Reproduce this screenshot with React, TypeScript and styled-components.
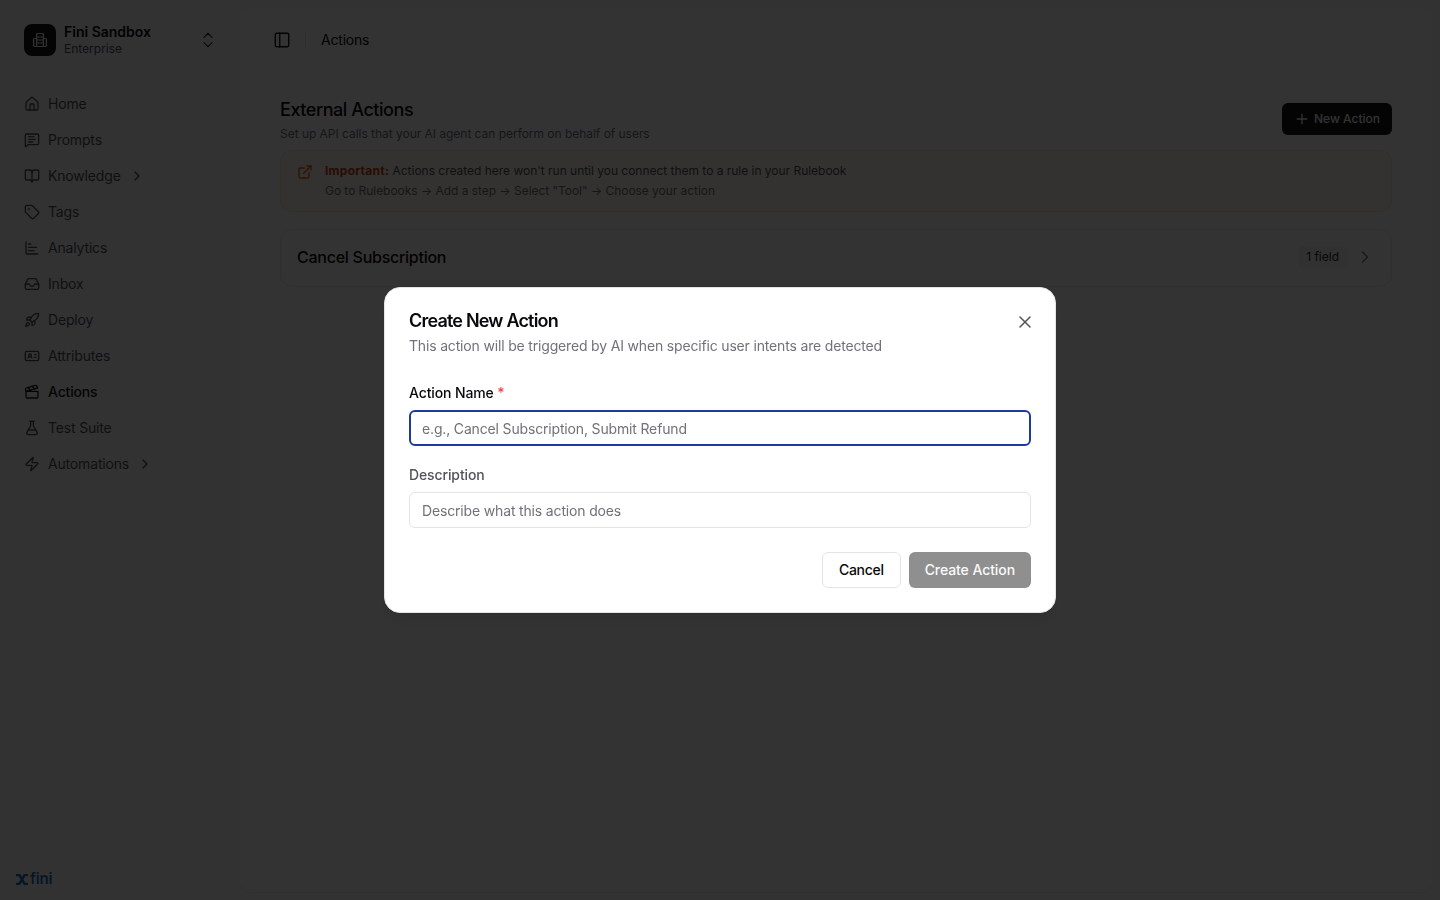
import React from 'react';
import styled, { createGlobalStyle } from 'styled-components';
import {
    BookOpen,
    ChartBar,
    ChevronRight,
    ChevronsUpDown,
    Clapperboard,
    ExternalLink,
    FlaskConical,
    House,
    IdCard,
    Inbox,
    MessageSquareText,
    PanelLeft,
    Plus,
    Rocket,
    Tag,
    X,
    Zap,
} from 'lucide-react';

const GlobalStyle = createGlobalStyle`
    html, body {
        margin: 0;
        height: 100%;
        background: #fafafa;
        font-family: Inter, "Liberation Sans", sans-serif;
        color: #0a0a0a;
        overflow: hidden;
    }
    * {
        box-sizing: border-box;
    }
`;

const Shell = styled.div`
    display: flex;
    width: 100%;
    height: 100vh;
`;

const Sidebar = styled.aside`
    width: 240px;
    flex-shrink: 0;
    display: flex;
    flex-direction: column;
    padding: 24px 16px 11px 16px;
`;

const TeamSwitcher = styled.div`
    display: flex;
    align-items: center;
    gap: 8px;
    height: 32px;
    padding: 0 6px 0 8px;
`;

const TeamLogo = styled.div`
    width: 32px;
    height: 32px;
    border-radius: 8px;
    background: #18181b;
    color: #fafafa;
    display: flex;
    align-items: center;
    justify-content: center;
`;

const TeamText = styled.div`
    flex: 1;
    align-self: flex-start;
    display: flex;
    flex-direction: column;
`;

const TeamName = styled.span`
    font-size: 14px;
    line-height: 16px;
    font-weight: 600;
`;

const TeamPlan = styled.span`
    font-size: 12px;
    line-height: 18px;
    color: #52525b;
`;

const Nav = styled.nav`
    display: flex;
    flex-direction: column;
    margin-top: 30px;
`;

const NavItem = styled.a<{ $active?: boolean }>`
    display: flex;
    align-items: center;
    gap: 8px;
    height: 36px;
    padding: 0 8px;
    font-size: 14px;
    letter-spacing: -0.17px;
    font-weight: ${(p) => (p.$active ? 500 : 400)};
    color: ${(p) => (p.$active ? '#18181b' : '#52525b')};
`;

const NavLabel = styled.span`
    padding-bottom: 2px;
`;

const Brand = styled.div`
    margin-top: auto;
    margin-left: -1px;
    display: flex;
    align-items: center;
    gap: 1px;
    color: #2670c4;
    font-size: 15px;
    font-weight: 600;
    line-height: 20px;
    letter-spacing: -0.2px;
`;

const Main = styled.main`
    flex: 1;
    margin: 8px 8px 8px 0;
    background: #fff;
    border-radius: 12px;
    box-shadow: 0 1px 2px rgba(0, 0, 0, 0.05);
    display: flex;
    flex-direction: column;
`;

const TopBar = styled.header`
    height: 64px;
    display: flex;
    align-items: center;
    padding: 0 33px;
    font-size: 14px;
    letter-spacing: -0.2px;
`;

const TopBarDivider = styled.span`
    width: 1px;
    height: 16px;
    background: #e4e4e7;
    margin: 0 15px 0 14px;
`;

const TopBarLabel = styled.span`
    padding-bottom: 2px;
`;

const Content = styled.div`
    padding: 25px 40px;
    display: flex;
    flex-direction: column;
`;

const PageHeader = styled.div`
    display: flex;
    justify-content: space-between;
    align-items: flex-start;
`;

const PageTitle = styled.h1`
    margin: 0 0 3px;
    font-size: 18px;
    line-height: 26px;
    font-weight: 500;
    letter-spacing: -0.45px;
`;

const PageSubtitle = styled.p`
    margin: 0;
    font-size: 12px;
    line-height: 16px;
    letter-spacing: -0.03px;
    color: #71717a;
`;

const PrimaryButton = styled.button`
    margin-top: 6px;
    display: flex;
    align-items: center;
    gap: 4px;
    height: 32px;
    padding: 0 12px;
    border: none;
    border-radius: 6px;
    background: #18181b;
    color: #fafafa;
    font: 500 12px Inter, sans-serif;
`;

const PrimaryLabel = styled.span`
    padding-bottom: 2px;
`;

const Callout = styled.div`
    margin-top: 8px;
    height: 62px;
    display: flex;
    gap: 12px;
    padding: 10px 16px;
    border: 1px solid #fde4c8;
    border-radius: 12px;
    background: #fffaf4;
    font-size: 12px;
    line-height: 20px;
`;

const CalloutIcon = styled.span`
    display: flex;
    margin-top: 3px;
    color: #ea580c;
`;

const CalloutLead = styled.div`
    color: #52525b;
    letter-spacing: -0.02px;
`;

const CalloutStrong = styled.strong`
    color: #c2410c;
    font-weight: 700;
    letter-spacing: 0.25px;
`;

const CalloutNote = styled.div`
    color: #71717a;
    letter-spacing: -0.05px;
`;

const ActionCard = styled.div`
    margin-top: 17px;
    height: 58px;
    display: flex;
    align-items: center;
    justify-content: space-between;
    padding: 0 16px 2px;
    border: 1px solid #e9e9ec;
    border-radius: 12px;
    background: #fff;
`;

const ActionName = styled.span`
    font-size: 16px;
    font-weight: 500;
    letter-spacing: -0.26px;
`;

const ActionMeta = styled.div`
    display: flex;
    align-items: center;
    gap: 8px;
    color: #71717a;
`;

const FieldBadge = styled.span`
    padding: 3px 8px;
    border-radius: 4px;
    background: #f4f4f5;
    font-size: 12px;
    line-height: 16px;
    color: #27272a;
`;

const Overlay = styled.div`
    position: fixed;
    inset: 0;
    background: rgba(0, 0, 0, 0.8);
`;

const Dialog = styled.div`
    position: fixed;
    left: 384px;
    top: 287px;
    width: 672px;
    background: #fff;
    border: 1px solid #e4e4e7;
    border-radius: 16px;
    padding: 24px;
    box-shadow: 0 10px 15px -3px rgba(0, 0, 0, 0.1);
    display: flex;
    flex-direction: column;
`;

const DialogTitle = styled.h2`
    margin: 0;
    font-size: 18px;
    line-height: 18px;
    font-weight: 600;
    letter-spacing: -0.8px;
    color: #09090b;
`;

const DialogText = styled.p`
    margin: 6px 0 0;
    font-size: 14px;
    line-height: 20px;
    letter-spacing: -0.17px;
    color: #71717a;
`;

const CloseButton = styled.button`
    position: absolute;
    top: 24px;
    right: 20px;
    padding: 0;
    display: flex;
    border: none;
    background: none;
    color: #52525b;
`;

const Field = styled.div<{ $first?: boolean }>`
    display: flex;
    flex-direction: column;
    gap: 9px;
    margin-top: ${(p) => (p.$first ? '28px' : '20px')};
`;

const Label = styled.label<{ $muted?: boolean }>`
    font-size: 14px;
    line-height: 17px;
    font-weight: 500;
    letter-spacing: -0.12px;
    color: ${(p) => (p.$muted ? '#52525b' : '#09090b')};
`;

const Required = styled.span`
    color: #ef4444;
`;

const TextInput = styled.input<{ $focused?: boolean }>`
    height: 36px;
    font: 400 14px Inter, sans-serif;
    letter-spacing: -0.16px;
    border-radius: 6px;
    border: ${(p) => (p.$focused ? '2px solid #1e3a9a' : '1px solid #e4e4e7')};
    padding: 0 ${(p) => (p.$focused ? '11px' : '12px')};
    outline: none;
    background: #fff;
    &::placeholder {
        color: #71717a;
        opacity: 1;
    }
`;

const Footer = styled.div`
    display: flex;
    justify-content: flex-end;
    gap: 8px;
    margin-top: 24px;
`;

const OutlineButton = styled.button`
    height: 36px;
    padding: 0 16px 2px;
    border: 1px solid #e4e4e7;
    border-radius: 6px;
    background: #fff;
    color: #09090b;
    font: 500 14px Inter, sans-serif;
    letter-spacing: -0.3px;
`;

const SubmitButton = styled.button`
    height: 36px;
    padding: 0 16px 2px;
    border: none;
    border-radius: 6px;
    background: #8f8f8f;
    color: #fafafa;
    font: 500 14px Inter, sans-serif;
    letter-spacing: -0.08px;
`;

const navItems = [
    { label: 'Home', icon: House },
    { label: 'Prompts', icon: MessageSquareText },
    { label: 'Knowledge', icon: BookOpen, more: true },
    { label: 'Tags', icon: Tag },
    { label: 'Analytics', icon: ChartBar },
    { label: 'Inbox', icon: Inbox },
    { label: 'Deploy', icon: Rocket },
    { label: 'Attributes', icon: IdCard },
    { label: 'Actions', icon: Clapperboard, active: true },
    { label: 'Test Suite', icon: FlaskConical },
    { label: 'Automations', icon: Zap, more: true },
];

function TeamIcon(): JSX.Element {
    return (
        <svg width="16" height="16" viewBox="0 0 16 16" fill="none" stroke="currentColor" strokeWidth="1.2">
            <rect x="4.6" y="1.5" width="6.8" height="13" rx="0.8" />
            <path d="M4.6 5h6.8M4.6 8h6.8M4.6 11h6.8" />
            <path d="M4.6 6.5H2.8a1.2 1.2 0 0 0-1.2 1.2v5.6a1.2 1.2 0 0 0 1.2 1.2h1.8" />
            <path d="M11.4 6.5h1.8a1.2 1.2 0 0 1 1.2 1.2v5.6a1.2 1.2 0 0 1-1.2 1.2h-1.8" />
        </svg>
    );
}

export default function App(): JSX.Element {
    return (
        <>
            <GlobalStyle />
            <Shell>
                <Sidebar>
                    <TeamSwitcher>
                        <TeamLogo>
                            <TeamIcon />
                        </TeamLogo>
                        <TeamText>
                            <TeamName>Fini Sandbox</TeamName>
                            <TeamPlan>Enterprise</TeamPlan>
                        </TeamText>
                        <ChevronsUpDown size={20} strokeWidth={1.25} />
                    </TeamSwitcher>
                    <Nav>
                        {navItems.map((item) => (
                            <NavItem key={item.label} $active={item.active}>
                                <item.icon size={16} />
                                <NavLabel>{item.label}</NavLabel>
                                {item.more && <ChevronRight size={16} />}
                            </NavItem>
                        ))}
                    </Nav>
                    <Brand>
                        <svg width="14" height="11" viewBox="0 0 15 12" fill="none" stroke="currentColor" strokeWidth="2.8">
                            <path d="M1 1h3.5l6 10H14M14 1h-3.5l-6 10H1" />
                        </svg>
                        fini
                    </Brand>
                </Sidebar>
                <Main>
                    <TopBar>
                        <PanelLeft size={18} strokeWidth={1.75} />
                        <TopBarDivider />
                        <TopBarLabel>Actions</TopBarLabel>
                    </TopBar>
                    <Content>
                        <PageHeader>
                            <div>
                                <PageTitle>External Actions</PageTitle>
                                <PageSubtitle>Set up API calls that your AI agent can perform on behalf of users</PageSubtitle>
                            </div>
                            <PrimaryButton>
                                <Plus size={16} />
                                <PrimaryLabel>New Action</PrimaryLabel>
                            </PrimaryButton>
                        </PageHeader>
                        <Callout>
                            <CalloutIcon>
                                <ExternalLink size={16} />
                            </CalloutIcon>
                            <div>
                                <CalloutLead>
                                    <CalloutStrong>Important:</CalloutStrong> Actions created here won't run until you connect them to a rule in your Rulebook
                                </CalloutLead>
                                <CalloutNote>Go to Rulebooks → Add a step → Select "Tool" → Choose your action</CalloutNote>
                            </div>
                        </Callout>
                        <ActionCard>
                            <ActionName>Cancel Subscription</ActionName>
                            <ActionMeta>
                                <FieldBadge>1 field</FieldBadge>
                                <ChevronRight size={20} strokeWidth={1.5} />
                            </ActionMeta>
                        </ActionCard>
                    </Content>
                </Main>
            </Shell>
            <Overlay />
            <Dialog>
                <DialogTitle>Create New Action</DialogTitle>
                <DialogText>This action will be triggered by AI when specific user intents are detected</DialogText>
                <CloseButton>
                    <X size={20} strokeWidth={1.75} />
                </CloseButton>
                <Field $first>
                    <Label>
                        Action Name <Required>*</Required>
                    </Label>
                    <TextInput $focused placeholder="e.g., Cancel Subscription, Submit Refund" />
                </Field>
                <Field>
                    <Label $muted>Description</Label>
                    <TextInput placeholder="Describe what this action does" />
                </Field>
                <Footer>
                    <OutlineButton>Cancel</OutlineButton>
                    <SubmitButton>Create Action</SubmitButton>
                </Footer>
            </Dialog>
        </>
    );
}
